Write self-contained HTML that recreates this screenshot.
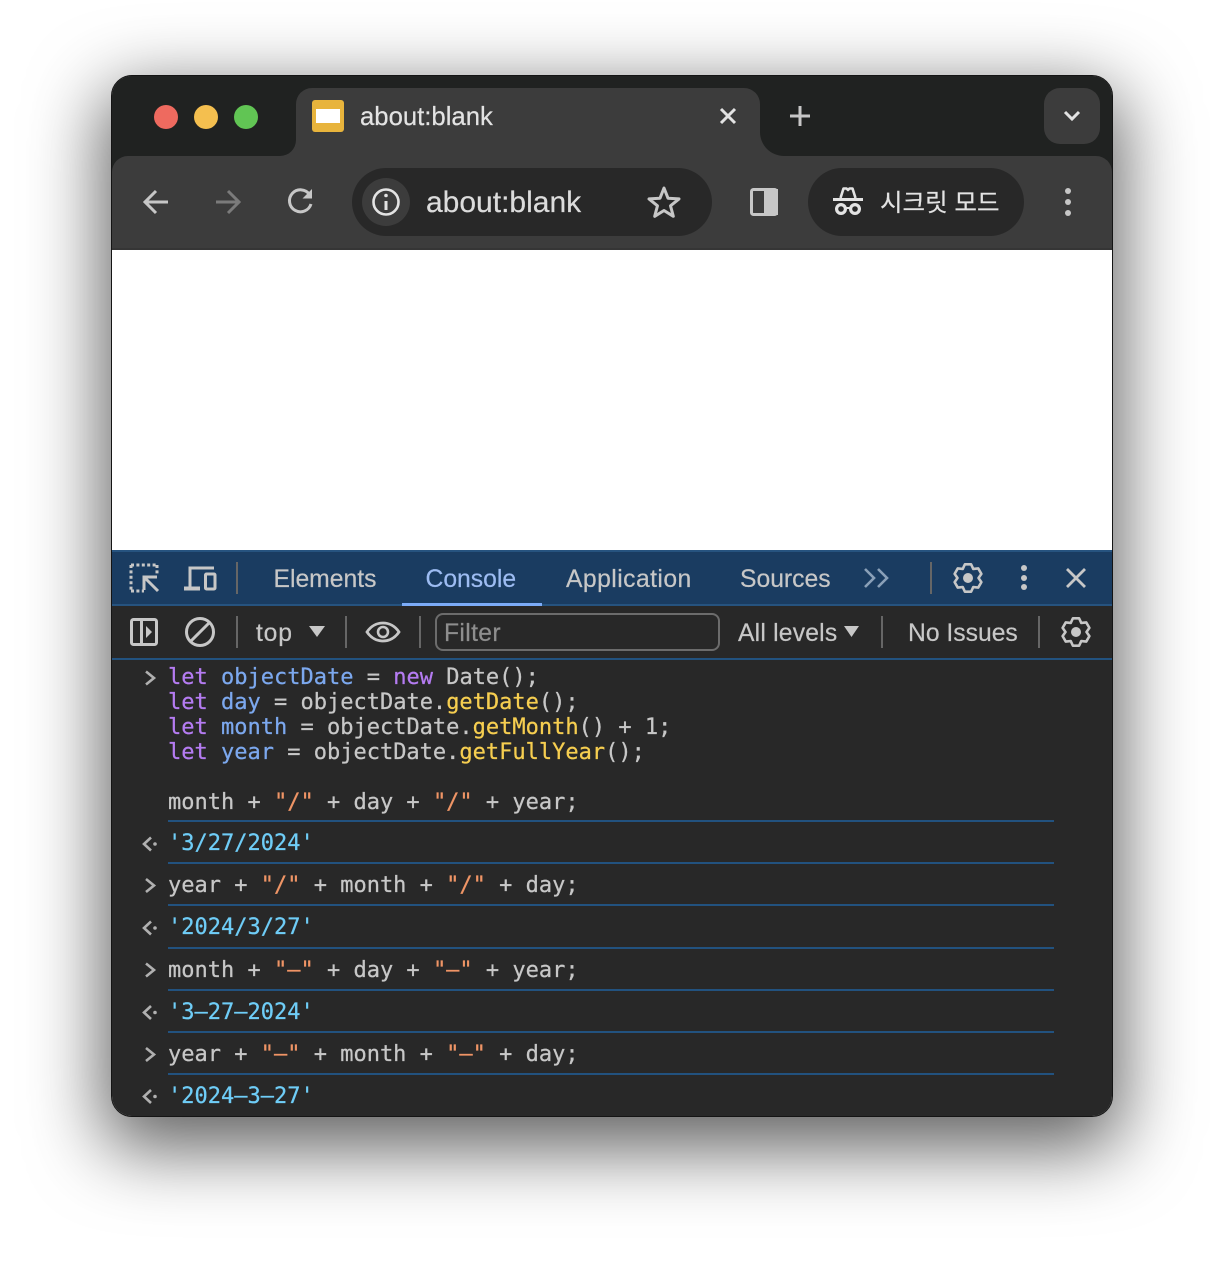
<!DOCTYPE html>
<html lang="ko"><head><meta charset="utf-8"><title>about:blank</title>
<style>
html,body{margin:0;padding:0;background:#fff}
body{width:1224px;height:1264px;position:relative;overflow:hidden}
#win{position:absolute;left:112px;top:76px;width:1000px;height:1040px;border-radius:20px;box-shadow:0 24px 74px 9px rgba(0,0,0,.62)}
#clip{position:absolute;left:112px;top:76px;width:1000px;height:1040px;border-radius:20px;overflow:hidden;background:#282828}
.r{position:absolute;left:0;width:1000px}
svg{position:absolute;left:0;top:0}
.t{position:absolute;white-space:pre;font-family:"Liberation Sans",sans-serif;line-height:30px;color:#c7c7c7;font-size:24.7px;-webkit-text-stroke:.2px currentColor}
.c{position:absolute;left:168px;white-space:pre;font-family:"DejaVu Sans Mono",monospace;font-size:22px;line-height:25px;color:#c7c7c7;-webkit-text-stroke:.25px currentColor}
.k{color:#b57cf2}.v{color:#7ca8ee}.m{color:#f6ce50}.s{color:#ef9566}.o{color:#6fcdf7}
.l{position:absolute;left:168px;width:886px;height:2px;background:#22527f}
#frame{position:absolute;left:111px;top:75px;width:1002px;height:1042px;box-sizing:border-box;border-radius:21px;border:1.5px solid #141414}
</style></head><body>
<div id="win"></div>
<div id="clip">
<div class="r" style="top:0;height:174px;background:#202221"></div>
<div class="r" style="top:80px;height:94px;background:#3c3c3c;border-radius:16px 16px 0 0"></div>
<div class="r" style="top:172px;height:2px;background:#353535"></div>
<div class="r" style="top:174px;height:300px;background:#fff"></div>
<div class="r" style="top:474px;height:56px;background:#1a3c61;border-top:2px solid #26537f;box-sizing:border-box"></div>
<div class="r" style="top:528px;height:2px;background:#26537f"></div>
<div class="r" style="top:530px;height:52px;background:#282828"></div>
<div class="r" style="top:582px;height:2px;background:#22527f"></div>
</div>

<svg width="1224" height="1264" viewBox="0 0 1224 1264">
<path d="M264 156H280A16 16 0 0 0 296 140V104A16 16 0 0 1 312 88H744A16 16 0 0 1 760 104V132A24 24 0 0 0 784 156H800V180H264Z" fill="#3c3c3c"/>
<circle cx="166" cy="117" r="12" fill="#ee6a5f"/><circle cx="206" cy="117" r="12" fill="#f4bf4f"/><circle cx="246" cy="117" r="12" fill="#61c554"/>
<rect x="312" y="100" width="32" height="32" rx="3" fill="#e8b43c"/><rect x="316" y="109" width="24" height="14" fill="#fff"/>
<path d="M721 109L735 123M735 109L721 123" stroke="#e3e3e3" stroke-width="3" fill="none"/>
<path d="M800 106V126M790 116H810" stroke="#c7c7c7" stroke-width="3" fill="none"/>
<rect x="1044" y="88" width="56" height="56" rx="16" fill="#3c3c3c"/>
<path d="M1065 112L1072 119L1079 112" stroke="#e3e3e3" stroke-width="3" fill="none"/>
<path d="M168 202H147M156 191L145 202L156 213" stroke="#c7c7c7" stroke-width="3" fill="none"/>
<path d="M216 202H237M228 191L239 202L228 213" stroke="#7b7b7b" stroke-width="3" fill="none"/>
<path d="M309.5 194.5A11 11 0 1 0 311 204" stroke="#c7c7c7" stroke-width="3" fill="none"/><path d="M312 189V198.5H302.5Z" fill="#c7c7c7"/>
<rect x="352" y="168" width="360" height="68" rx="34" fill="#282828"/>
<circle cx="386" cy="202" r="24" fill="#3c3c3c"/>
<circle cx="386" cy="202" r="12.5" stroke="#e3e3e3" stroke-width="2.6" fill="none"/>
<path d="M386 201V210" stroke="#e3e3e3" stroke-width="3"/><circle cx="386" cy="195.5" r="1.8" fill="#e3e3e3"/>
<path d="M664 188L668 198.2L679 198.9L670.5 205.8L673.3 216.3L664 210.5L654.7 216.3L657.5 205.8L649 198.9L660 198.2Z" stroke="#c7c7c7" stroke-width="3" stroke-linejoin="round" fill="none"/>
<rect x="751.5" y="189.5" width="25" height="25" rx="2" stroke="#c7c7c7" stroke-width="3" fill="none"/><rect x="764" y="189" width="14" height="26" fill="#c7c7c7"/>
<rect x="808" y="168" width="216" height="68" rx="34" fill="#282828"/>
<path d="M833 199.5H863" stroke="#e3e3e3" stroke-width="3"/>
<path d="M840.5 198L843.5 188.5H846.5L848 190L849.5 188.5H852.5L855.5 198" stroke="#e3e3e3" stroke-width="2.6" stroke-linejoin="round" fill="none"/>
<circle cx="841" cy="209" r="4.4" stroke="#e3e3e3" stroke-width="3.2" fill="none"/><circle cx="855" cy="209" r="4.4" stroke="#e3e3e3" stroke-width="3.2" fill="none"/>
<path d="M845.5 208H850.5" stroke="#e3e3e3" stroke-width="2"/>
<circle cx="1068" cy="191" r="3" fill="#c7c7c7"/><circle cx="1068" cy="202" r="3" fill="#c7c7c7"/><circle cx="1068" cy="213" r="3" fill="#c7c7c7"/>

<path d="M131 565H157M131 565V591M131 591H144" stroke="#c7c7c7" stroke-width="3" stroke-dasharray="3 2.4" fill="none"/>
<path d="M157 565V575" stroke="#c7c7c7" stroke-width="3" stroke-dasharray="3 2.4" fill="none"/>
<path d="M158 591L144 577M144 590V577H157" stroke="#c7c7c7" stroke-width="3" fill="none"/>
<path d="M190 589V568H214" stroke="#c7c7c7" stroke-width="3" fill="none"/><path d="M184 586.5H200V590.5H184Z" fill="#c7c7c7"/>
<rect x="205.5" y="574" width="9.5" height="15" rx="1" stroke="#c7c7c7" stroke-width="3" fill="none"/>
<path d="M237 562V594M931 562V594" stroke="#666" stroke-width="2"/>
<path d="M865 569L874 578L865 587M878 569L887 578L878 587" stroke="#8aa0b8" stroke-width="2.6" fill="none"/>
<path d="M-3.15-13.64L3.15-13.64L5.25-9.09L10.24-9.55L13.39-4.09L10.5 0L13.39 4.09L10.24 9.55L5.25 9.09L3.15 13.64L-3.15 13.64L-5.25 9.09L-10.24 9.55L-13.39 4.09L-10.5 0L-13.39-4.09L-10.24-9.55L-5.25-9.09Z" transform="translate(968 578)" stroke="#c7c7c7" stroke-width="2.6" stroke-linejoin="round" fill="none"/>
<circle cx="968" cy="578" r="5" fill="#c7c7c7"/>
<circle cx="1024" cy="568" r="3" fill="#c7c7c7"/><circle cx="1024" cy="578" r="3" fill="#c7c7c7"/><circle cx="1024" cy="587" r="3" fill="#c7c7c7"/>
<path d="M1067 569L1085 587M1085 569L1067 587" stroke="#c7c7c7" stroke-width="2.8" fill="none"/>
<rect x="402" y="603" width="140" height="3" fill="#7cacf8"/>

<rect x="131.5" y="619.5" width="25" height="25" rx="2" stroke="#c7c7c7" stroke-width="3" fill="none"/>
<path d="M141.5 619V645" stroke="#c7c7c7" stroke-width="3"/><path d="M146 626L152 632L146 638Z" fill="#c7c7c7"/>
<circle cx="200" cy="632" r="13.5" stroke="#c7c7c7" stroke-width="3" fill="none"/><path d="M191 641L209 623" stroke="#c7c7c7" stroke-width="3"/>
<path d="M237 616V648M346 616V648M420 616V648M882 616V648M1039 616V648" stroke="#666" stroke-width="2"/>
<path d="M309 626H325L317 637Z" fill="#c7c7c7"/>
<path d="M367 632C375 620 391 620 399 632C391 644 375 644 367 632Z" stroke="#c7c7c7" stroke-width="2.8" fill="none"/><circle cx="383" cy="632" r="5" stroke="#c7c7c7" stroke-width="2.6" fill="none"/>
<rect x="436" y="614" width="283" height="36" rx="7" stroke="#6c6c6c" stroke-width="2" fill="none"/>
<path d="M844 626H859L851.5 637Z" fill="#c7c7c7"/>
<path d="M-3.15-13.64L3.15-13.64L5.25-9.09L10.24-9.55L13.39-4.09L10.5 0L13.39 4.09L10.24 9.55L5.25 9.09L3.15 13.64L-3.15 13.64L-5.25 9.09L-10.24 9.55L-13.39 4.09L-10.5 0L-13.39-4.09L-10.24-9.55L-5.25-9.09Z" transform="translate(1076 632)" stroke="#c7c7c7" stroke-width="2.6" stroke-linejoin="round" fill="none"/>
<circle cx="1076" cy="632" r="5" fill="#c7c7c7"/>

<g stroke="#b0b0b0" stroke-width="2.6" fill="none">
<path d="M146 671.5L154 678L146 684.5M146 879L154 885.5L146 892M146 963.5L154 970L146 976.5M146 1048L154 1054.5L146 1061"/>
<path d="M151 837.5L144 844L151 850.5M151 921.5L144 928L151 934.5M151 1006L144 1012.5L151 1019M151 1090L144 1096.5L151 1103"/>
</g>
<g fill="#b0b0b0"><circle cx="155" cy="844" r="1.8"/><circle cx="155" cy="928" r="1.8"/><circle cx="155" cy="1012.5" r="1.8"/><circle cx="155" cy="1096.5" r="1.8"/></g>
</svg>

<div class="t" style="left:360px;top:102px;font-size:25.7px;color:#e3e3e3">about:blank</div>
<div class="t" style="left:426px;top:188px;font-size:30px;color:#dcdcdc">about:blank</div>
<div class="t" style="left:880px;top:189px;font-size:24.5px;color:#e3e3e3;font-family:'Liberation Sans','Noto Sans CJK KR',sans-serif">시크릿 모드</div>
<div class="t" style="left:273.5px;top:565px">Elements</div>
<div class="t" style="left:425.5px;top:565px;color:#9dbcf2">Console</div>
<div class="t" style="left:566px;top:565px;letter-spacing:.45px">Application</div>
<div class="t" style="left:740px;top:565px">Sources</div>
<div class="t" style="left:256px;top:619px;letter-spacing:.8px">top</div>
<div class="t" style="left:444px;top:619px;color:#8e8e8e;letter-spacing:.35px">Filter</div>
<div class="t" style="left:738px;top:619px;letter-spacing:.2px">All levels</div>
<div class="t" style="left:908px;top:619px">No Issues</div>

<div class="c" style="top:665px"><span class="k">let</span> <span class="v">objectDate</span> = <span class="k">new</span> Date();
<span class="k">let</span> <span class="v">day</span> = objectDate.<span class="m">getDate</span>();
<span class="k">let</span> <span class="v">month</span> = objectDate.<span class="m">getMonth</span>() + 1;
<span class="k">let</span> <span class="v">year</span> = objectDate.<span class="m">getFullYear</span>();

month + <span class="s">"/"</span> + day + <span class="s">"/"</span> + year;</div>
<div class="l" style="top:820px"></div>
<div class="c o" style="top:831px">'3/27/2024'</div>
<div class="l" style="top:862px"></div>
<div class="c" style="top:873px">year + <span class="s">"/"</span> + month + <span class="s">"/"</span> + day;</div>
<div class="l" style="top:904px"></div>
<div class="c o" style="top:915px">'2024/3/27'</div>
<div class="l" style="top:947px"></div>
<div class="c" style="top:958px">month + <span class="s">"–"</span> + day + <span class="s">"–"</span> + year;</div>
<div class="l" style="top:989px"></div>
<div class="c o" style="top:1000px">'3–27–2024'</div>
<div class="l" style="top:1031px"></div>
<div class="c" style="top:1042px">year + <span class="s">"–"</span> + month + <span class="s">"–"</span> + day;</div>
<div class="l" style="top:1073px"></div>
<div class="c o" style="top:1084px">'2024–3–27'</div>
<div id="frame"></div>
</body></html>
